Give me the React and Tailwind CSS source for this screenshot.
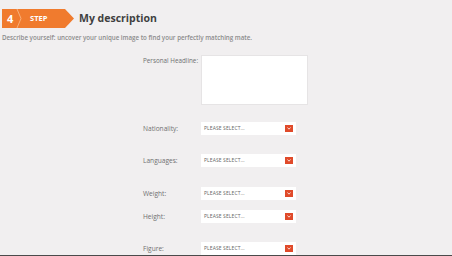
const font = { fontFamily: '"Open Sans", "Liberation Sans", sans-serif' }

function StepBanner() {
  return (
    <div className="relative w-[72px] h-[19px] shrink-0">
      <svg width="72" height="19" viewBox="0 0 72 19" className="absolute inset-0">
        <polygon points="0,0 63,0 72,9.5 63,19 0,19" fill="#f07b2e" />
        <polyline points="15,0 19,9.5 15,19" fill="none" stroke="#f7b07c" strokeWidth="1" />
      </svg>
      <span className="absolute left-[5px] top-0 leading-[19px] text-[11px] font-bold text-white">4</span>
      <span className="absolute left-[28px] top-0 leading-[19px] text-[7.5px] font-bold text-white">STEP</span>
    </div>
  )
}

function SelectBox() {
  return (
    <div className="w-[95px] h-[13px] bg-white flex items-center justify-between pl-[3px] pr-[3px]">
      <span className="text-[5px] text-[#666] tracking-[0.1px]">PLEASE SELECT...</span>
      <span className="w-[8px] h-[7px] bg-[#e04a2a] flex items-center justify-center">
        <svg width="4" height="3" viewBox="0 0 4 3">
          <polyline points="0.5,0.5 2,2.2 3.5,0.5" fill="none" stroke="#fff" strokeWidth="0.8" />
        </svg>
      </span>
    </div>
  )
}

function Row({ label, mt }) {
  return (
    <div className={`flex items-center ${mt}`}>
      <div className="w-[58px] text-[6.6px] text-[#707070] whitespace-nowrap">{label}</div>
      <SelectBox />
    </div>
  )
}

export default function App() {
  return (
    <div className="w-[452px] h-[256px] bg-[#f1eff0] overflow-hidden flex flex-col relative" style={font}>
      <div className="flex items-center pt-[9px] pl-[2px]">
        <StepBanner />
        <h1 className="ml-[5px] text-[10.5px] font-bold text-[#3f3f3f] leading-none">My description</h1>
      </div>
      <p className="mt-[5px] pl-[2px] text-[6.2px] font-semibold text-[#8c8c8c] leading-[10px]">
        Describe yourself: uncover your unique image to find your perfectly matching mate.
      </p>
      <div className="pl-[143px] flex flex-col">
        <div className="flex mt-[12px]">
          <div className="w-[58px] text-[6.3px] text-[#707070] pt-[1px] leading-[10px] whitespace-nowrap">Personal Headline:</div>
          <div className="w-[107px] h-[50px] bg-white border border-[#e6e4e5]" />
        </div>
        <Row label="Nationality:" mt="mt-[17px]" />
        <Row label="Languages:" mt="mt-[19px]" />
        <Row label="Weight:" mt="mt-[20px]" />
        <Row label="Height:" mt="mt-[10px]" />
        <Row label="Figure:" mt="mt-[19px]" />
      </div>
      <div className="absolute left-0 right-0 bottom-0 h-[1px] bg-[#4a4a4a]" />
    </div>
  )
}
